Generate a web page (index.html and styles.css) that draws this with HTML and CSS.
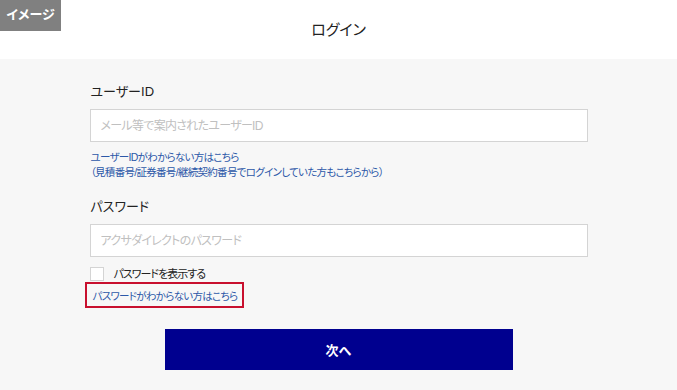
FILE: index.html
```html
<!DOCTYPE html>
<html lang="ja">
<head>
    <meta charset="UTF-8">
    <meta name="viewport" content="width=device-width, initial-scale=1.0">
    <title>ログイン</title>
    <link rel="stylesheet" href="styles.css">
</head>
<body>
    <div class="badge">イメージ</div>
    <header class="header">
        <h1 class="title">ログイン</h1>
    </header>

    <main class="content">
        <form class="login-form">
            <label class="field-label" for="userid">ユーザーID</label>
            <input class="text-input" id="userid" type="text" placeholder="メール等で案内されたユーザーID">
            <div class="help">
                <a href="#" class="help-link">ユーザーIDがわからない方はこちら</a>
                <a href="#" class="help-link">（見積番号/証券番号/継続契約番号でログインしていた方もこちらから）</a>
            </div>

            <label class="field-label pw-label" for="password">パスワード</label>
            <input class="text-input" id="password" type="password" placeholder="アクサダイレクトのパスワード">
            <label class="show-pw">
                <span class="checkbox"></span>
                <span>パスワードを表示する</span>
            </label>
            <div class="forgot">
                <a href="#" class="help-link">パスワードがわからない方はこちら</a>
            </div>

            <button type="button" class="next-btn">次へ</button>
        </form>
    </main>
</body>
</html>
```

FILE: styles.css
```css
body {
    margin: 0;
    padding: 0;
    background-color: #f7f7f7;
    font-family: "Liberation Sans", "Noto Sans CJK JP", sans-serif;
    font-feature-settings: "palt";
    color: #222;
}

.badge {
    position: absolute;
    top: 0;
    left: 0;
    width: 61px;
    height: 31px;
    background-color: #808080;
    color: #fff;
    font-size: 13px;
    font-weight: bold;
    line-height: 30px;
    text-align: center;
}

.header {
    background-color: #fff;
    box-sizing: border-box;
    height: 59px;
    padding-bottom: 3px;
    display: flex;
    justify-content: center;
    align-items: center;
}

.title {
    margin: 0;
    font-size: 15px;
    font-weight: normal;
    color: #222;
}

.content {
    width: 498px;
    margin: 0 auto;
    padding-top: 23px;
}

.login-form {
    display: flex;
    flex-direction: column;
}

.field-label {
    font-size: 13px;
    line-height: 20px;
    margin-bottom: 7px;
    margin-left: 1px;
}

.pw-label {
    margin-top: 17px;
}

.text-input {
    box-sizing: border-box;
    height: 33px;
    width: 498px;
    border: 1px solid #d4d4d4;
    background: #fff;
    padding: 0 10px;
    font-family: inherit;
    font-feature-settings: "palt";
    font-size: 12px;
    letter-spacing: -0.7px;
    outline: none;
}

.text-input::placeholder {
    color: #c0c0c0;
}

.help {
    display: flex;
    flex-direction: column;
    margin-top: 8px;
}

.help-link {
    color: #2c58a8;
    text-decoration: none;
    font-size: 10.5px;
    letter-spacing: -0.7px;
    line-height: 15px;
    margin-left: 1px;
}

.show-pw {
    display: flex;
    align-items: center;
    gap: 10px;
    margin-top: 9px;
    font-size: 11px;
    letter-spacing: -1px;
    line-height: 16px;
}

.checkbox {
    width: 12px;
    height: 12px;
    border: 1px solid #d4d4d4;
    background: #fff;
}

.forgot {
    align-self: flex-start;
    margin-top: 0;
    margin-left: -5px;
    padding: 2px 5px;
    border: 2px solid #c8102e;
}

.next-btn {
    align-self: center;
    width: 348px;
    height: 41px;
    margin-top: 21px;
    border: none;
    background-color: #00008f;
    color: #fff;
    font-family: inherit;
    font-size: 13px;
    font-weight: bold;
    cursor: pointer;
}
```
